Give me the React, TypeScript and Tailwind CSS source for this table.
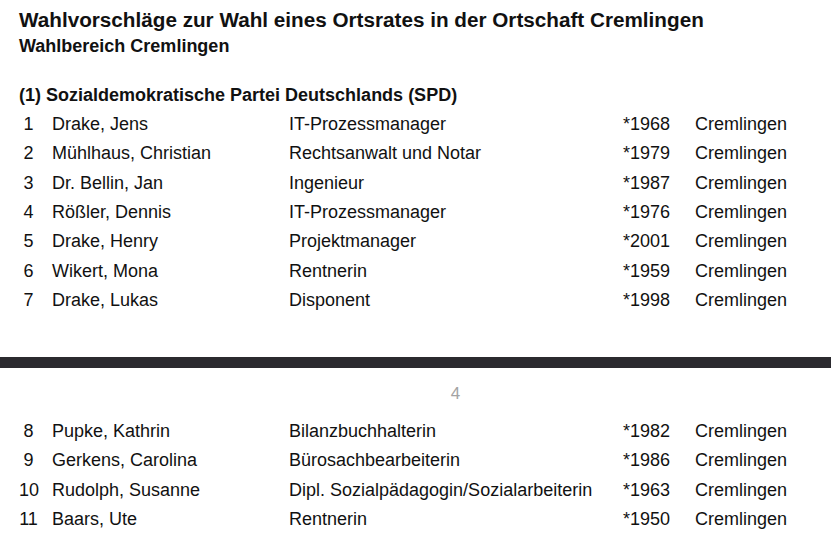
import React from "react";

type Candidate = {
  nr: number;
  name: string;
  job: string;
  year: string;
  city: string;
};

const page1: Candidate[] = [
  { nr: 1, name: "Drake, Jens", job: "IT-Prozessmanager", year: "*1968", city: "Cremlingen" },
  { nr: 2, name: "Mühlhaus, Christian", job: "Rechtsanwalt und Notar", year: "*1979", city: "Cremlingen" },
  { nr: 3, name: "Dr. Bellin, Jan", job: "Ingenieur", year: "*1987", city: "Cremlingen" },
  { nr: 4, name: "Rößler, Dennis", job: "IT-Prozessmanager", year: "*1976", city: "Cremlingen" },
  { nr: 5, name: "Drake, Henry", job: "Projektmanager", year: "*2001", city: "Cremlingen" },
  { nr: 6, name: "Wikert, Mona", job: "Rentnerin", year: "*1959", city: "Cremlingen" },
  { nr: 7, name: "Drake, Lukas", job: "Disponent", year: "*1998", city: "Cremlingen" },
];

const page2: Candidate[] = [
  { nr: 8, name: "Pupke, Kathrin", job: "Bilanzbuchhalterin", year: "*1982", city: "Cremlingen" },
  { nr: 9, name: "Gerkens, Carolina", job: "Bürosachbearbeiterin", year: "*1986", city: "Cremlingen" },
  { nr: 10, name: "Rudolph, Susanne", job: "Dipl. Sozialpädagogin/Sozialarbeiterin", year: "*1963", city: "Cremlingen" },
  { nr: 11, name: "Baars, Ute", job: "Rentnerin", year: "*1950", city: "Cremlingen" },
];

function CandidateRow({ c }: { c: Candidate }) {
  return (
    <div className="grid grid-cols-[33px_237px_334px_72px_1fr] h-[29.3px] items-center text-[18px] text-[#111]">
      <span className="w-[19px] text-center">{c.nr}</span>
      <span>{c.name}</span>
      <span>{c.job}</span>
      <span>{c.year}</span>
      <span>{c.city}</span>
    </div>
  );
}

export default function App() {
  return (
    <div
      className="w-[831px] h-[542px] overflow-hidden bg-white"
      style={{ fontFamily: '"Liberation Sans", Arial, sans-serif' }}
    >
      {/* Seite 3 */}
      <div className="h-[357px] pl-[19px] pt-[7px]">
        <h1 className="text-[20.7px] font-bold leading-[26px] text-[#111]">
          Wahlvorschläge zur Wahl eines Ortsrates in der Ortschaft Cremlingen
        </h1>
        <h2 className="text-[18px] font-bold leading-[26px] text-[#111]">
          Wahlbereich Cremlingen
        </h2>
        <h3 className="mt-[23px] text-[18px] font-bold leading-[26px] text-[#111]">
          (1) Sozialdemokratische Partei Deutschlands (SPD)
        </h3>
        <div className="mt-[2px]">
          {page1.map((c) => (
            <CandidateRow key={c.nr} c={c} />
          ))}
        </div>
      </div>

      {/* Seitentrenner */}
      <div className="h-[11px] bg-[#2b2a2f]" />

      {/* Seite 4 */}
      <div className="pl-[19px]">
        <div className="pt-[17px] h-[49px] pl-[80px] pr-[19px] text-center text-[17px] leading-[18px] text-[#a3a3a3]">
          4
        </div>
        <div>
          {page2.map((c) => (
            <CandidateRow key={c.nr} c={c} />
          ))}
        </div>
      </div>
    </div>
  );
}
